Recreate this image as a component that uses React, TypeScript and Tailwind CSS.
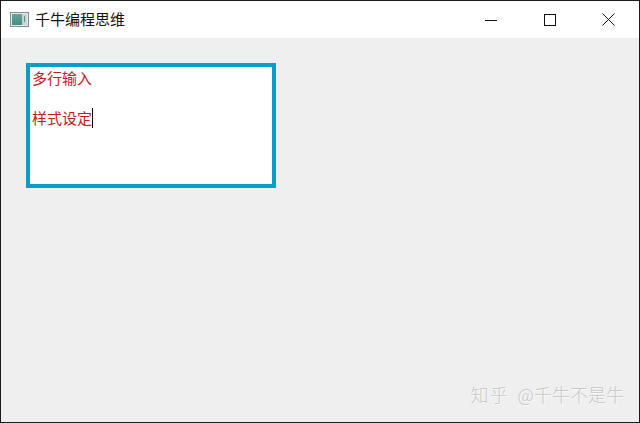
import React from 'react';

const cjk = "font-['Noto_Sans_CJK_SC','Noto_Sans_CJK_JP',sans-serif]";

function AppIcon() {
  return (
    <svg width="20" height="16" viewBox="0 0 20 16" className="shrink-0">
      <defs>
        <linearGradient id="pane" x1="0" y1="0" x2="0" y2="1">
          <stop offset="0" stopColor="#6f9f9c" />
          <stop offset="1" stopColor="#3f8f82" />
        </linearGradient>
      </defs>
      <rect x="0.5" y="0.5" width="18" height="14" fill="#e8ecee" stroke="#7f8c94" />
      <rect x="2" y="2" width="10" height="11" fill="url(#pane)" />
      <rect x="12" y="2" width="5" height="11" fill="#c9d3d6" />
      <rect x="14" y="4" width="1" height="6" fill="#5f8f8c" />
    </svg>
  );
}

export default function App() {
  return (
    <div className={`relative w-[640px] h-[423px] overflow-hidden flex flex-col bg-[#efefef] border border-[#1c1c1c] ${cjk}`}>
      {/* title bar */}
      <div className="h-[37px] bg-white flex items-center shrink-0">
        <div className="pl-[9px] w-[34px] flex items-center">
          <AppIcon />
        </div>
        <span className="text-[15px] leading-none text-[#111] mb-[3px]">千牛编程思维</span>
        <div className="ml-auto flex items-center h-full pr-[1px]">
          <div className="w-[59px] h-full flex items-center justify-center">
            <svg width="12" height="12" viewBox="0 0 12 12"><path d="M0 6.5H12" stroke="#111" strokeWidth="1" /></svg>
          </div>
          <div className="w-[59px] h-full flex items-center justify-center">
            <svg width="12" height="12" viewBox="0 0 12 12"><rect x="0.5" y="0.5" width="11" height="11" fill="none" stroke="#111" /></svg>
          </div>
          <div className="w-[59px] h-full flex items-center justify-center">
            <svg width="13" height="13" viewBox="0 0 13 13"><path d="M0.5 0.5L12.5 12.5M12.5 0.5L0.5 12.5" stroke="#111" strokeWidth="1" /></svg>
          </div>
        </div>
      </div>

      {/* content */}
      <div className="flex-1 pl-[25px] pt-[25px]">
        <div className="w-[250px] h-[125px] bg-white border-4 border-[#0a9dc7] pl-[2px] pt-[1px] text-[15px] leading-[20px] text-[#c21a1f]">
          <div>多行输入</div>
          <div className="h-[20px]" />
          <div className="flex items-center">
            <span>样式设定</span>
            <span className="w-px h-[20px] bg-black" />
          </div>
        </div>
      </div>

      {/* watermark */}
      <div className="absolute right-[15px] bottom-[16px] flex items-center gap-[8px] text-[18px] leading-[24px] font-light text-[#c8c8c8] whitespace-nowrap [text-shadow:1px_1px_0_#f8f8f8]">
        <span className="tracking-[1.5px]">知乎</span>
        <span>@千牛不是牛</span>
      </div>
    </div>
  );
}
